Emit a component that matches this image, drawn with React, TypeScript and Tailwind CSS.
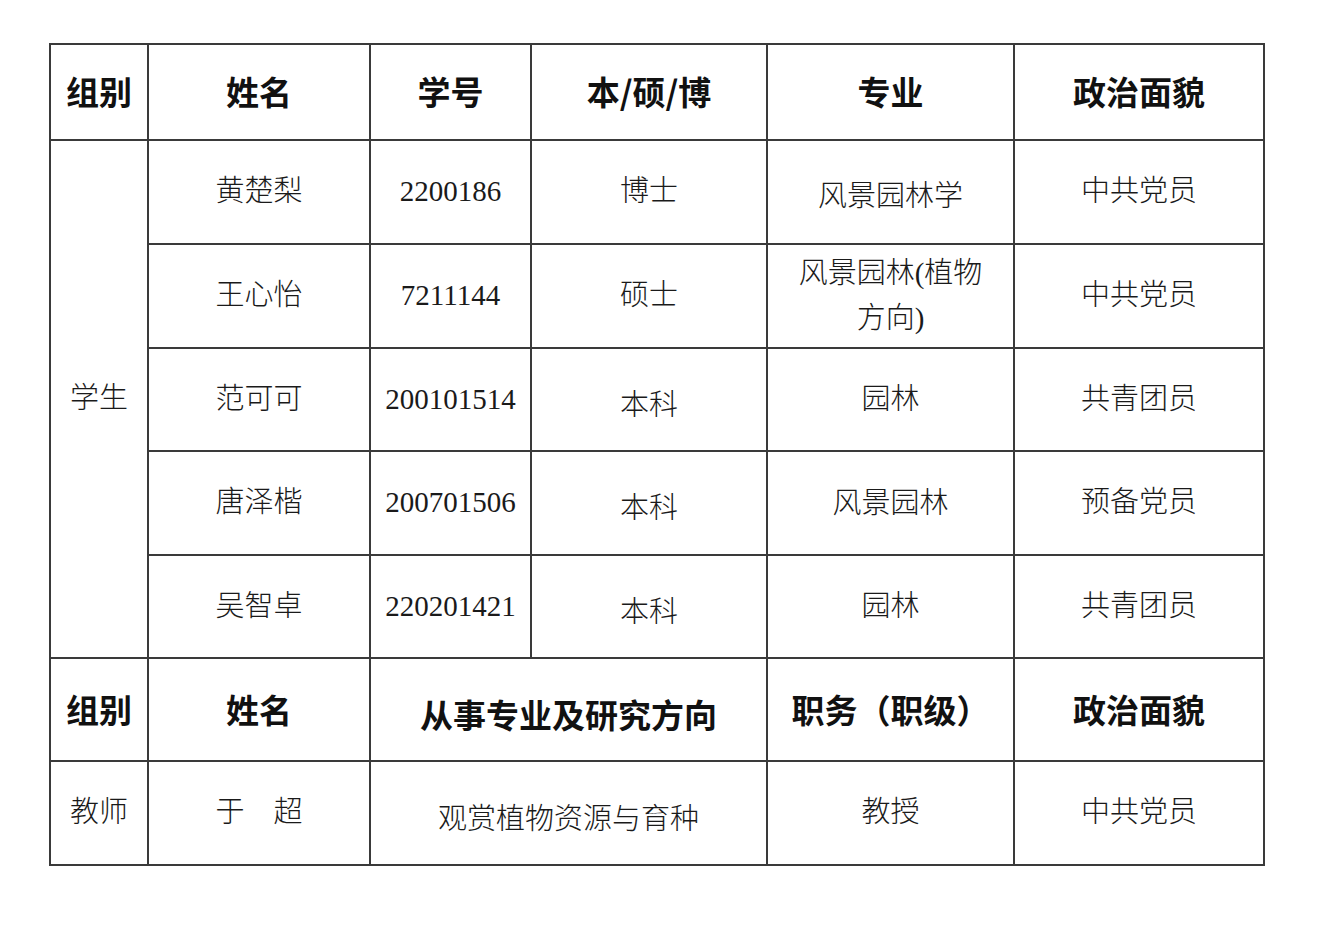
import React from "react";

const head = "font-['Noto_Sans_CJK_SC',sans-serif] font-bold text-[33px] text-[#111]";
const body = "font-['Liberation_Serif','Noto_Sans_CJK_SC',serif] font-light text-[29px] text-[#1a1a1a]";
const cell = "border-2 border-[#3a3a3a] text-center align-middle p-0";

const students = [
  { name: "黄楚梨", id: "2200186", degree: "博士", major: "风景园林学", party: "中共党员" },
  { name: "王心怡", id: "7211144", degree: "硕士", major: "风景园林(植物\n方向)", party: "中共党员" },
  { name: "范可可", id: "200101514", degree: "本科", major: "园林", party: "共青团员" },
  { name: "唐泽楷", id: "200701506", degree: "本科", major: "风景园林", party: "预备党员" },
  { name: "吴智卓", id: "220201421", degree: "本科", major: "园林", party: "共青团员" },
];

export default function App() {
  return (
    <div className="w-[1321px] h-[938px] bg-white pt-[43px] pl-[49px]">
      <table className="border-collapse table-fixed w-[1216px]">
        <colgroup>
          <col className="w-[98px]" />
          <col className="w-[222px]" />
          <col className="w-[161px]" />
          <col className="w-[236px]" />
          <col className="w-[247px]" />
          <col className="w-[250px]" />
        </colgroup>
        <tbody>
          <tr className="h-[96px]">
            <td className={`${cell} ${head}`}>组别</td>
            <td className={`${cell} ${head}`}>姓名</td>
            <td className={`${cell} ${head}`}>学号</td>
            <td className={`${cell} ${head}`}>本/硕/博</td>
            <td className={`${cell} ${head}`}>专业</td>
            <td className={`${cell} ${head}`}>政治面貌</td>
          </tr>
          {students.map((s, i) => (
            <tr key={s.id} className={i === 2 || i === 4 ? "h-[103px]" : "h-[104px]"}>
              {i === 0 && (
                <td rowSpan={5} className={`${cell} ${body}`}>
                  学生
                </td>
              )}
              <td className={`${cell} ${body}`}>{s.name}</td>
              <td className={`${cell} ${body}`}>{s.id}</td>
              <td className={`${cell} ${body} ${s.degree === "本科" ? "pt-[12px]" : ""}`}>{s.degree}</td>
              <td className={`${cell} ${body} leading-[45px] whitespace-pre-line ${i === 0 ? "pt-[8px]" : ""}`}>
                {s.major}
              </td>
              <td className={`${cell} ${body}`}>{s.party}</td>
            </tr>
          ))}
          <tr className="h-[103px]">
            <td className={`${cell} ${head}`}>组别</td>
            <td className={`${cell} ${head}`}>姓名</td>
            <td colSpan={2} className={`${cell} ${head} pt-[10px]`}>
              从事专业及研究方向
            </td>
            <td className={`${cell} ${head}`}>职务（职级）</td>
            <td className={`${cell} ${head}`}>政治面貌</td>
          </tr>
          <tr className="h-[104px]">
            <td className={`${cell} ${body}`}>教师</td>
            <td className={`${cell} ${body}`}>于　超</td>
            <td colSpan={2} className={`${cell} ${body} pt-[14px]`}>
              观赏植物资源与育种
            </td>
            <td className={`${cell} ${body}`}>教授</td>
            <td className={`${cell} ${body}`}>中共党员</td>
          </tr>
        </tbody>
      </table>
    </div>
  );
}
